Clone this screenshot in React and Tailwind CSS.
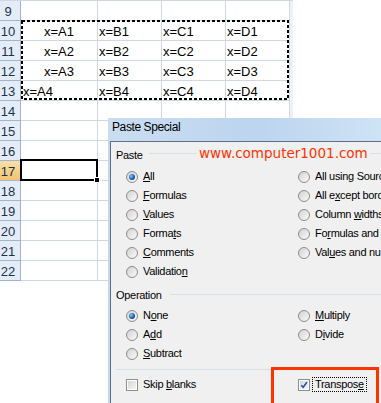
import React from 'react'

const ROWS = [9, 10, 11, 12, 13, 14, 15, 16, 17, 18, 19, 20, 21, 22]

const DATA = {
  10: ['x=A1', 'x=B1', 'x=C1', 'x=D1'],
  11: ['x=A2', 'x=B2', 'x=C2', 'x=D2'],
  12: ['x=A3', 'x=B3', 'x=C3', 'x=D3'],
  13: ['x=A4', 'x=B4', 'x=C4', 'x=D4'],
}

const COL_W = ['w-[77px]', 'w-[64px]', 'w-[64px]', 'w-[64px]']

function Radio({ checked }) {
  return (
    <span className="w-[12px] h-[12px] shrink-0 rounded-full border border-[#8c8c8c] bg-gradient-to-br from-[#d2d2d2] to-[#fbfbfb] flex items-center justify-center">
      {checked && (
        <span className="w-[6px] h-[6px] rounded-full bg-[radial-gradient(circle_at_35%_35%,#8cc8f4,#1357a8_60%,#0b3a78)]" />
      )}
    </span>
  )
}

function Check({ checked }) {
  return (
    <span className="w-[12px] h-[12px] shrink-0 border border-[#8e8f8f] bg-white p-[1px] flex">
      <span className={`relative flex-1 ${checked ? 'bg-gradient-to-br from-[#cfd9e8] to-[#f3f6fb]' : 'bg-gradient-to-br from-[#d6d6d6] to-[#f5f5f5]'}`}>
        {checked && (
          <svg viewBox="0 0 10 10" className="absolute inset-0 w-full h-full">
            <path d="M1.6 5.2 L4 7.8 L8.6 1.6" fill="none" stroke="#2b4d9a" strokeWidth="1.9" />
          </svg>
        )}
      </span>
    </span>
  )
}

function Opt({ checked, children, box }) {
  return (
    <div className="h-[19px] flex items-center gap-[5px] whitespace-nowrap">
      {box ? <Check checked={checked} /> : <Radio checked={checked} />}
      <span>{children}</span>
    </div>
  )
}

export default function App() {
  return (
    <div className="relative w-[381px] h-[403px] overflow-hidden bg-white" style={{ fontFamily: '"Liberation Sans", Arial, sans-serif' }}>
      {/* sheet */}
      <div className="w-[293px] border-t border-[#d0d7e5]">
        {ROWS.map(r => {
          const cells = DATA[r] || ['', '', '', '']
          return (
            <div key={r} className="flex h-[20px]">
              <div className={`w-[21px] h-full border-r border-b border-[#9eb6ce] flex items-center justify-center pr-[4px] pt-[2px] text-[13px] text-[#1c3150] ${r === 17 ? 'bg-gradient-to-b from-[#fadfa8] to-[#f3c46c]' : 'bg-[#e4ecf7]'}`}>
                {r}
              </div>
              {cells.map((c, i) => (
                <div key={i} className={`${COL_W[i]} h-full border-r border-b border-[#d0d7e5] flex items-center pt-[2px] text-[13px] text-black whitespace-nowrap overflow-hidden ${i === 0 && r !== 13 ? 'justify-center' : i === 0 ? 'pl-[2px]' : 'pl-[1px]'}`}>
                  {c}
                </div>
              ))}
              <div className="w-[3px] h-full bg-[#f1f1f1]" />
            </div>
          )
        })}
      </div>

      {/* copy marquee */}
      <svg className="absolute left-[21px] top-[20px]" width="268" height="80">
        <rect x="1" y="1" width="266" height="78" fill="none" stroke="#000" strokeWidth="2" strokeDasharray="3 2" />
      </svg>

      {/* active cell A17 */}
      <div className="absolute left-[20px] top-[159px] w-[78px] h-[22px] border-2 border-black" />
      <div className="absolute left-[94px] top-[177px] w-[6px] h-[6px] bg-black border border-white" />

      {/* Paste Special dialog */}
      <div className="absolute left-[108px] top-[118px] w-[300px] h-[300px] bg-[#c3d8ee] flex flex-col text-black">
        <div className="h-[23px] pl-[4px] pt-[1px] leading-[16px] text-[12px] tracking-[-0.4px] bg-gradient-to-r from-[#cadef2] via-[#bcd4ee] to-[#d3e6f8]">
          Paste Special
        </div>
        <div className="relative flex-1 ml-[2px] border-l border-t border-[#5d7089] bg-[#f0f0f0] text-[11px] tracking-[-0.3px] overflow-hidden">
          {/* Paste group */}
          <div className="flex items-start mt-[7px] h-[13px] leading-[13px] pl-[5px]">
            <span>Paste</span>
            <div className="flex-1 ml-[6px] mt-[4px] h-px bg-[#d5dfe5]" />
          </div>
          <div className="flex mt-[5px]">
            <div className="w-[187px] shrink-0 pl-[15px]">
              <Opt checked><u>A</u>ll</Opt>
              <Opt><u>F</u>ormulas</Opt>
              <Opt><u>V</u>alues</Opt>
              <Opt>Forma<u>t</u>s</Opt>
              <Opt><u>C</u>omments</Opt>
              <Opt>Validatio<u>n</u></Opt>
            </div>
            <div className="shrink-0">
              <Opt>All using Source t<u>h</u>eme</Opt>
              <Opt>All e<u>x</u>cept borders</Opt>
              <Opt>Column <u>w</u>idths</Opt>
              <Opt>Fo<u>r</u>mulas and number formats</Opt>
              <Opt>Val<u>u</u>es and number formats</Opt>
            </div>
          </div>

          {/* Operation group */}
          <div className="flex items-start mt-[8px] h-[13px] leading-[13px] pl-[5px]">
            <span>Operation</span>
            <div className="flex-1 ml-[8px] mt-[5px] h-px bg-[#d5dfe5]" />
          </div>
          <div className="flex mt-[4px]">
            <div className="w-[187px] shrink-0 pl-[15px]">
              <Opt checked>N<u>o</u>ne</Opt>
              <Opt>A<u>d</u>d</Opt>
              <Opt><u>S</u>ubtract</Opt>
            </div>
            <div className="shrink-0">
              <Opt><u>M</u>ultiply</Opt>
              <Opt>D<u>i</u>vide</Opt>
            </div>
          </div>

          <div className="mt-[6px] ml-[5px] h-px bg-[#d5dfe5]" />

          <div className="flex mt-[5px]">
            <div className="w-[187px] shrink-0 pl-[15px]">
              <Opt box>Skip <u>b</u>lanks</Opt>
            </div>
            <div className="shrink-0 h-[19px] flex items-center gap-[2px] whitespace-nowrap">
              <Check checked />
              <span className="border border-dotted border-black px-[2px] leading-[13px]">Transpos<u>e</u></span>
            </div>
          </div>

          {/* watermark */}
          <span className="absolute left-[86px] top-[4px] px-[2px] bg-[#f0f0f0] text-[13.5px] leading-[15px] tracking-normal text-[#ff3300]" style={{ fontFamily: '"DejaVu Sans", Verdana, sans-serif' }}>
            www.computer1001.com
          </span>
        </div>
      </div>

      {/* highlight box */}
      <div className="absolute left-[271px] top-[367px] w-[108px] h-[60px] border-[3px] border-[#ff3300]" />
    </div>
  )
}
